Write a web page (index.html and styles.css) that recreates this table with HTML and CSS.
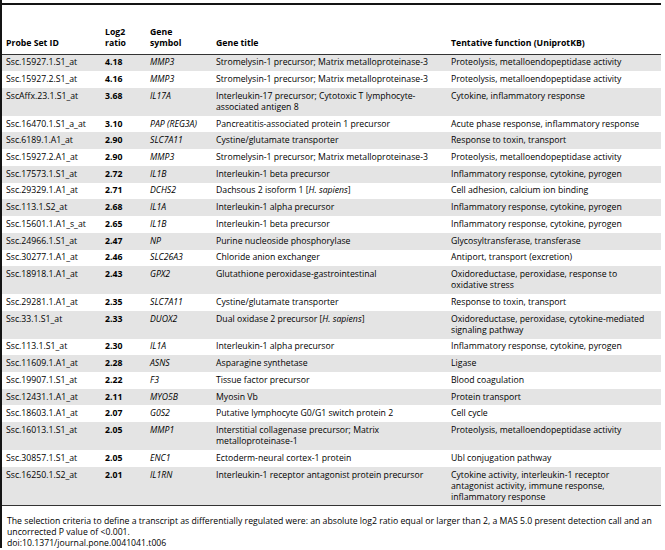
FILE: index.html
```html
<!DOCTYPE html>
<html>
<head>
<meta charset="utf-8">
<link rel="stylesheet" href="styles.css">
</head>
<body>
<div class="frame">
<table class="data">
<colgroup>
<col class="c1"><col class="c2"><col class="c3"><col class="c4"><col class="c5">
</colgroup>
<thead>
<tr><th>Probe Set ID</th><th>Log2<br>ratio</th><th>Gene<br>symbol</th><th>Gene title</th><th>Tentative function (UniprotKB)</th></tr>
</thead>
<tbody>
<tr><td>Ssc.15927.1.S1_at</td><td class="num">4.18</td><td class="sym">MMP3</td><td>Stromelysin-1 precursor; Matrix metalloproteinase-3</td><td>Proteolysis, metalloendopeptidase activity</td></tr>
<tr><td>Ssc.15927.2.S1_at</td><td class="num">4.16</td><td class="sym">MMP3</td><td>Stromelysin-1 precursor; Matrix metalloproteinase-3</td><td>Proteolysis, metalloendopeptidase activity</td></tr>
<tr><td>SscAffx.23.1.S1_at</td><td class="num">3.68</td><td class="sym">IL17A</td><td>Interleukin-17 precursor; Cytotoxic T lymphocyte-<br>associated antigen 8</td><td>Cytokine, inflammatory response</td></tr>
<tr><td>Ssc.16470.1.S1_a_at</td><td class="num">3.10</td><td class="sym">PAP (REG3A)</td><td>Pancreatitis-associated protein 1 precursor</td><td>Acute phase response, inflammatory response</td></tr>
<tr><td>Ssc.6189.1.A1_at</td><td class="num">2.90</td><td class="sym">SLC7A11</td><td>Cystine/glutamate transporter</td><td>Response to toxin, transport</td></tr>
<tr><td>Ssc.15927.2.A1_at</td><td class="num">2.90</td><td class="sym">MMP3</td><td>Stromelysin-1 precursor; Matrix metalloproteinase-3</td><td>Proteolysis, metalloendopeptidase activity</td></tr>
<tr><td>Ssc.17573.1.S1_at</td><td class="num">2.72</td><td class="sym">IL1B</td><td>Interleukin-1 beta precursor</td><td>Inflammatory response, cytokine, pyrogen</td></tr>
<tr><td>Ssc.29329.1.A1_at</td><td class="num">2.71</td><td class="sym">DCHS2</td><td>Dachsous 2 isoform 1 [<i>H. sapiens</i>]</td><td>Cell adhesion, calcium ion binding</td></tr>
<tr><td>Ssc.113.1.S2_at</td><td class="num">2.68</td><td class="sym">IL1A</td><td>Interleukin-1 alpha precursor</td><td>Inflammatory response, cytokine, pyrogen</td></tr>
<tr><td>Ssc.15601.1.A1_s_at</td><td class="num">2.65</td><td class="sym">IL1B</td><td>Interleukin-1 beta precursor</td><td>Inflammatory response, cytokine, pyrogen</td></tr>
<tr><td>Ssc.24966.1.S1_at</td><td class="num">2.47</td><td class="sym">NP</td><td>Purine nucleoside phosphorylase</td><td>Glycosyltransferase, transferase</td></tr>
<tr><td>Ssc.30277.1.A1_at</td><td class="num">2.46</td><td class="sym">SLC26A3</td><td>Chloride anion exchanger</td><td>Antiport, transport (excretion)</td></tr>
<tr><td>Ssc.18918.1.A1_at</td><td class="num">2.43</td><td class="sym">GPX2</td><td>Glutathione peroxidase-gastrointestinal</td><td>Oxidoreductase, peroxidase, response to<br>oxidative stress</td></tr>
<tr><td>Ssc.29281.1.A1_at</td><td class="num">2.35</td><td class="sym">SLC7A11</td><td>Cystine/glutamate transporter</td><td>Response to toxin, transport</td></tr>
<tr><td>Ssc.33.1.S1_at</td><td class="num">2.33</td><td class="sym">DUOX2</td><td>Dual oxidase 2 precursor [<i>H. sapiens</i>]</td><td>Oxidoreductase, peroxidase, cytokine-mediated<br>signaling pathway</td></tr>
<tr><td>Ssc.113.1.S1_at</td><td class="num">2.30</td><td class="sym">IL1A</td><td>Interleukin-1 alpha precursor</td><td>Inflammatory response, cytokine, pyrogen</td></tr>
<tr><td>Ssc.11609.1.A1_at</td><td class="num">2.28</td><td class="sym">ASNS</td><td>Asparagine synthetase</td><td>Ligase</td></tr>
<tr><td>Ssc.19907.1.S1_at</td><td class="num">2.22</td><td class="sym">F3</td><td>Tissue factor precursor</td><td>Blood coagulation</td></tr>
<tr><td>Ssc.12431.1.A1_at</td><td class="num">2.11</td><td class="sym">MYO5B</td><td>Myosin Vb</td><td>Protein transport</td></tr>
<tr><td>Ssc.18603.1.A1_at</td><td class="num">2.07</td><td class="sym">G0S2</td><td>Putative lymphocyte G0/G1 switch protein 2</td><td>Cell cycle</td></tr>
<tr><td>Ssc.16013.1.S1_at</td><td class="num">2.05</td><td class="sym">MMP1</td><td>Interstitial collagenase precursor; Matrix<br>metalloproteinase-1</td><td>Proteolysis, metalloendopeptidase activity</td></tr>
<tr><td>Ssc.30857.1.S1_at</td><td class="num">2.05</td><td class="sym">ENC1</td><td>Ectoderm-neural cortex-1 protein</td><td>Ubl conjugation pathway</td></tr>
<tr><td>Ssc.16250.1.S2_at</td><td class="num">2.01</td><td class="sym">IL1RN</td><td>Interleukin-1 receptor antagonist protein precursor</td><td>Cytokine activity, interleukin-1 receptor<br>antagonist activity, immune response,<br>inflammatory response</td></tr>
</tbody>
</table>
<p class="note">The selection criteria to define a transcript as differentially regulated were: an absolute log2 ratio equal or larger than 2, a MAS 5.0 present detection call and an<br>uncorrected P value of &lt;0.001.<br>doi:10.1371/journal.pone.0041041.t006</p>
</div>
</body>
</html>
```

FILE: styles.css
```css
html, body {
  margin: 0;
  padding: 0;
  background: #ffffff;
}

body {
  font-family: "Open Sans", "Liberation Sans", sans-serif;
  font-size: 8.7px;
  color: #000000;
}

.frame {
  width: 659px;
  border-left: 2px solid #141414;
  padding-top: 3px;
}

.data {
  width: 659px;
  border-collapse: collapse;
  table-layout: fixed;
  border-top: 2px solid #141414;
  border-bottom: 1px solid #333333;
}

.c1 { width: 99px; }
.c2 { width: 45px; }
.c3 { width: 66px; }
.c4 { width: 235px; }
.c5 { width: 214px; }

.data th {
  height: 50px;
  box-sizing: border-box;
  vertical-align: bottom;
  text-align: left;
  font-weight: 700;
  line-height: 11px;
  padding: 0 4px 4.5px 4px;
  border-bottom: 1px solid #333333;
}

.data td {
  vertical-align: top;
  text-align: left;
  line-height: 11px;
  padding: 2.85px 4px 2.9px 4px;
  white-space: nowrap;
}

.data tbody tr:nth-child(odd) td {
  background: #e4e4e4;
}

.data td.num {
  font-weight: 700;
}

.data td.sym {
  font-style: italic;
}

.note {
  margin: 0;
  padding: 10px 0 0 5px;
  line-height: 10.6px;
  white-space: nowrap;
}
```
